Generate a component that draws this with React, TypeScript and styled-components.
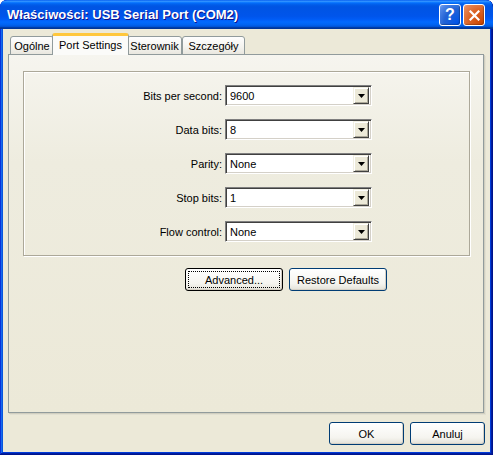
import React from 'react'
import styled, { createGlobalStyle } from 'styled-components'

const GlobalStyle = createGlobalStyle`
  html, body {
    margin: 0;
    padding: 0;
    background: #ffffff;
  }
  body {
    font-family: Tahoma, "Liberation Sans", Arial, sans-serif;
    font-size: 11px;
    color: #000;
  }
`

const Frame = styled.div`
  width: 493px;
  height: 455px;
  box-sizing: border-box;
  display: flex;
  flex-direction: column;
  padding: 0 3px 3px 3px;
  border-radius: 7px 7px 0 0;
  overflow: hidden;
  background: #0855dd;
  box-shadow: inset -1px -1px #00138c, inset 1px 1px #0831d9,
    inset -2px -2px #001ea0, inset 2px 2px #166aee,
    inset -3px -3px #003bda, inset 3px 3px #0855dd;
`

const TitleBar = styled.div`
  height: 29px;
  flex-shrink: 0;
  margin: 0 -3px;
  padding: 0 8px 0 7px;
  display: flex;
  align-items: center;
  justify-content: space-between;
  background: linear-gradient(
    180deg,
    #0058ee 0%,
    #3593ff 4%,
    #288eff 6%,
    #127dff 8%,
    #036ffc 10%,
    #0262ee 14%,
    #0057e5 20%,
    #0054e3 24%,
    #0055eb 56%,
    #005bf5 66%,
    #026afe 76%,
    #0062ef 86%,
    #0052d6 92%,
    #0040ab 94%,
    #003092 100%
  );
  border-radius: 7px 7px 0 0;
`

const Title = styled.span`
  font-family: "Trebuchet MS", "Liberation Sans", Arial, sans-serif;
  font-weight: bold;
  font-size: 13px;
  color: #fff;
  text-shadow: 1px 1px #0f1089;
`

const TitleButtons = styled.div`
  display: flex;
  gap: 2px;
  padding-top: 1px;
`

const CaptionButton = styled.div<{ $kind: 'help' | 'close' }>`
  width: 22px;
  height: 22px;
  box-sizing: border-box;
  border: 1px solid #fff;
  border-radius: 3px;
  display: flex;
  align-items: center;
  justify-content: center;
  color: #fff;
  font-family: "Liberation Sans", Arial, sans-serif;
  font-weight: bold;
  font-size: 16px;
  background: ${p =>
    p.$kind === 'close'
      ? 'radial-gradient(circle at 90% 90%, #cc4600 0%, #dc6527 55%, #e68a5c 90%, #f2b294 100%)'
      : 'radial-gradient(circle at 90% 90%, #0054e9 0%, #2263d5 55%, #4f86e6 85%, #7aa6f2 100%)'};
  box-shadow: inset -1px -1px 1px rgba(0, 0, 0, 0.25);
`

const Client = styled.div`
  flex: 1;
  display: flex;
  flex-direction: column;
  background: #ece9d8;
  padding: 5px 6px 6px 5px;
`

const TabStrip = styled.div`
  height: 21px;
  display: flex;
  align-items: flex-end;
  padding-left: 2px;
  position: relative;
  z-index: 1;
  margin-bottom: -1px;
`

const Tab = styled.div<{ $active?: boolean; $w: number }>`
  box-sizing: border-box;
  width: ${p => p.$w}px;
  height: ${p => (p.$active ? 22 : 19)}px;
  margin: 0 ${p => (p.$active ? -2 : 0)}px;
  display: flex;
  align-items: ${p => (p.$active ? 'flex-start' : 'center')};
  padding-top: ${p => (p.$active ? 3 : 0)}px;
  justify-content: center;
  border: 1px solid #919b9c;
  border-bottom: ${p => (p.$active ? 'none' : '1px solid #919b9c')};
  border-top: ${p => (p.$active ? '3px solid #ffc73c' : '1px solid #919b9c')};
  border-radius: 3px 3px 0 0;
  background: ${p =>
    p.$active ? '#fbfbf9' : 'linear-gradient(180deg, #fefefe 0%, #f4f3ee 60%, #e9e7df 100%)'};
  position: relative;
  z-index: ${p => (p.$active ? 2 : 1)};
  white-space: nowrap;
`

const Panel = styled.div`
  height: 359px;
  box-sizing: border-box;
  border: 1px solid #919b9c;
  box-shadow: 1px 1px 0 #d0cebf, 2px 2px 0 #e2e0d2;
  padding: 16px 13px 0 14px;
  display: flex;
  flex-direction: column;
  background: linear-gradient(180deg, #f6f5ef 0%, #eeecdf 30%, #ece9d8 100%);
`

const GroupBox = styled.div`
  height: 185px;
  box-sizing: border-box;
  border: 1px solid #aca899;
  box-shadow: inset 1px 1px 0 #ffffff, 1px 1px 0 #ffffff;
  padding-top: 13px;
  display: grid;
  grid-template-columns: 198px 147px;
  grid-auto-rows: 21px;
  column-gap: 3px;
  row-gap: 13px;
  align-content: start;
`

const Label = styled.div`
  display: flex;
  align-items: center;
  justify-content: flex-end;
  white-space: nowrap;
`

const Combo = styled.div`
  box-sizing: border-box;
  height: 21px;
  background: #fff;
  border-top: 1px solid #7f7f7f;
  border-left: 1px solid #7f7f7f;
  border-right: 1px solid #ffffff;
  border-bottom: 1px solid #ffffff;
  box-shadow: inset 1px 1px 0 #404040, inset -1px -1px 0 #d4d0c8;
  display: flex;
  align-items: center;
  justify-content: space-between;
  padding: 2px 2px 2px 4px;
`

const DropButton = styled.div`
  width: 16px;
  height: 17px;
  box-sizing: border-box;
  background: #ece9d8;
  border-top: 1px solid #f1efe2;
  border-left: 1px solid #f1efe2;
  border-right: 1px solid #404040;
  border-bottom: 1px solid #404040;
  box-shadow: inset 1px 1px 0 #ffffff, inset -1px -1px 0 #aca899;
  display: flex;
  align-items: center;
  justify-content: center;
`

const ActionRow = styled.div`
  display: flex;
  gap: 6px;
  margin-top: 12px;
  margin-left: 162px;
`

const Button = styled.div<{ $w: number; $focused?: boolean }>`
  box-sizing: border-box;
  width: ${p => p.$w}px;
  height: 23px;
  border: 1px solid ${p => (p.$focused ? '#000000' : '#003c74')};
  border-radius: 3px;
  background: linear-gradient(180deg, #ffffff 0%, #f5f4ef 70%, #e3e1d7 100%);
  box-shadow: inset -1px -1px 0 #d6d0c5;
  display: flex;
  align-items: center;
  justify-content: center;
  position: relative;
  white-space: nowrap;
  &::after {
    content: '';
    display: ${p => (p.$focused ? 'block' : 'none')};
    position: absolute;
    inset: 2px;
    border: 1px dotted #000;
  }
`

const BottomRow = styled.div`
  display: flex;
  justify-content: flex-end;
  gap: 6px;
  margin-top: 9px;
  margin-right: -1px;
`

const Arrow = () => (
  <svg width="7" height="4" viewBox="0 0 7 4">
    <path d="M0 0h7L3.5 4z" fill="#000" />
  </svg>
)

const CloseGlyph = () => (
  <svg width="11" height="11" viewBox="0 0 11 11">
    <path d="M1.5 1.5l8 8M9.5 1.5l-8 8" stroke="#fff" strokeWidth="2.2" strokeLinecap="square" />
  </svg>
)

const settings = [
  { label: 'Bits per second:', value: '9600' },
  { label: 'Data bits:', value: '8' },
  { label: 'Parity:', value: 'None' },
  { label: 'Stop bits:', value: '1' },
  { label: 'Flow control:', value: 'None' },
]

const tabs = [
  { name: 'Ogólne', w: 44 },
  { name: 'Port Settings', w: 77, active: true },
  { name: 'Sterownik', w: 55 },
  { name: 'Szczegóły', w: 63 },
]

export default function App() {
  return (
    <>
      <GlobalStyle />
      <Frame>
        <TitleBar>
          <Title>Właściwości: USB Serial Port (COM2)</Title>
          <TitleButtons>
            <CaptionButton $kind='help'>?</CaptionButton>
            <CaptionButton $kind='close'>
              <CloseGlyph />
            </CaptionButton>
          </TitleButtons>
        </TitleBar>
        <Client>
          <TabStrip>
            {tabs.map(t => (
              <Tab key={t.name} $w={t.w} $active={t.active}>
                {t.name}
              </Tab>
            ))}
          </TabStrip>
          <Panel>
            <GroupBox>
              {settings.map(s => (
                <React.Fragment key={s.label}>
                  <Label>{s.label}</Label>
                  <Combo>
                    <span>{s.value}</span>
                    <DropButton>
                      <Arrow />
                    </DropButton>
                  </Combo>
                </React.Fragment>
              ))}
            </GroupBox>
            <ActionRow>
              <Button $w={98} $focused>Advanced...</Button>
              <Button $w={98}>Restore Defaults</Button>
            </ActionRow>
          </Panel>
          <BottomRow>
            <Button $w={75}>OK</Button>
            <Button $w={75}>Anuluj</Button>
          </BottomRow>
        </Client>
      </Frame>
    </>
  )
}
